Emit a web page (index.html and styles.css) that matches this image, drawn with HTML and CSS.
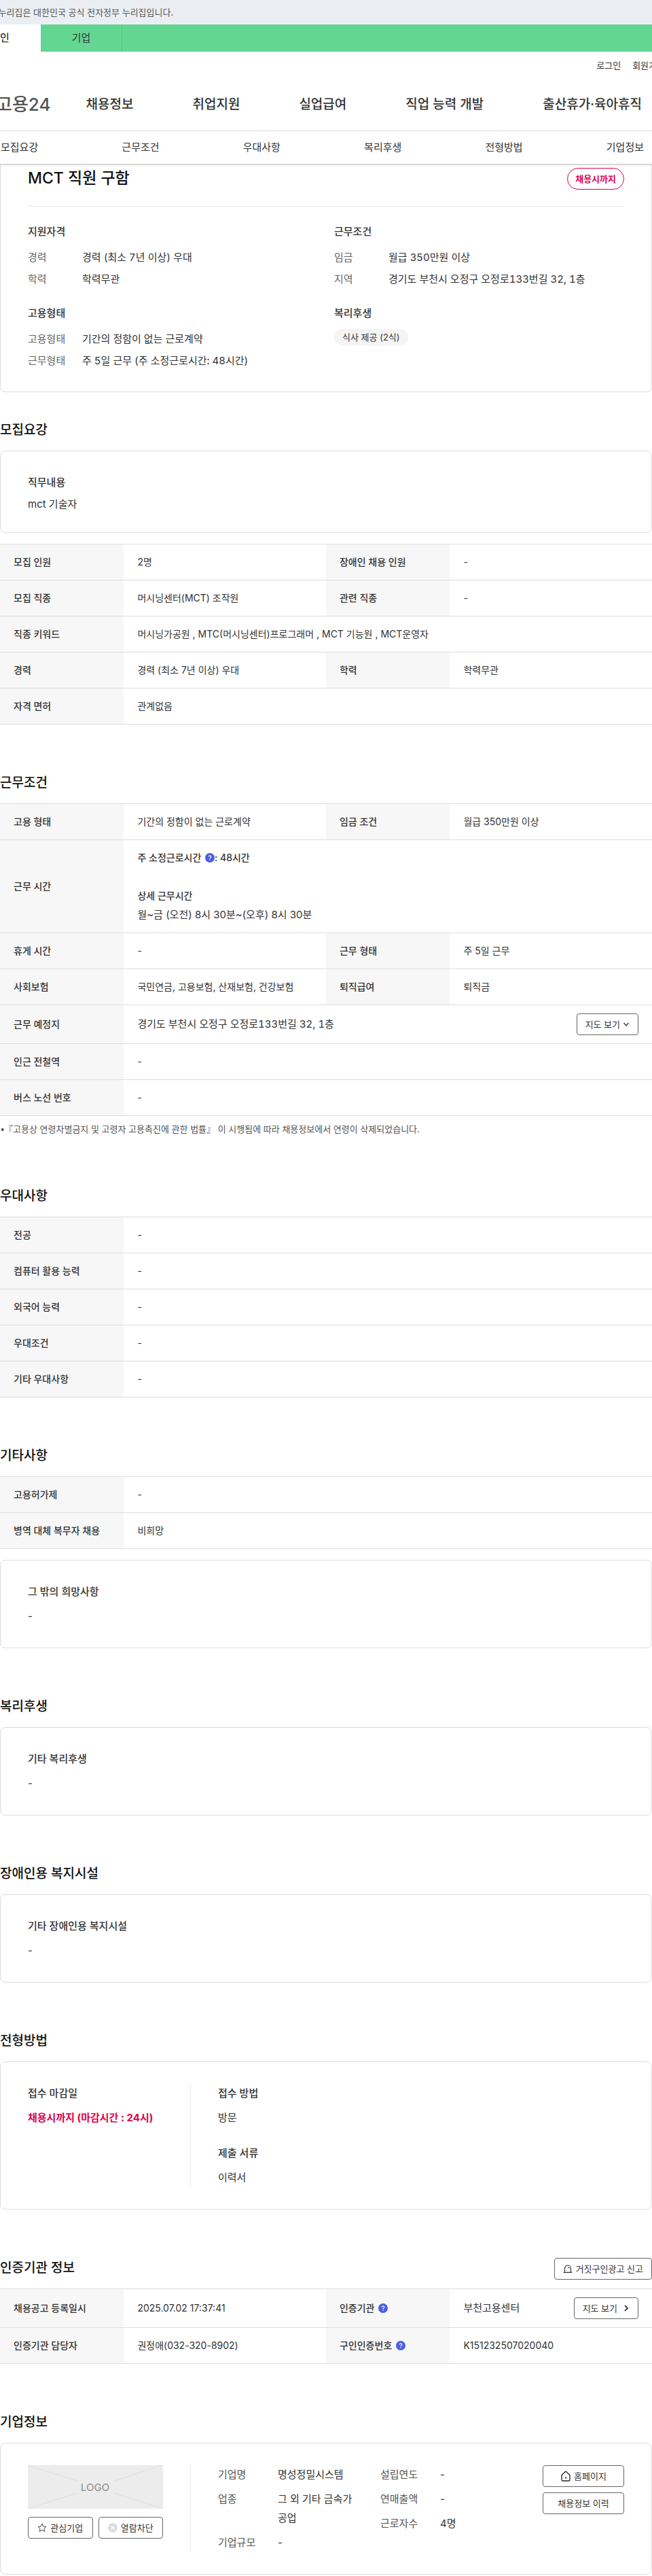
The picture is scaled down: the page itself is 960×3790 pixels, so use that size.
FILE: index.html
```html
<!DOCTYPE html>
<html lang="ko">
<head>
<meta charset="utf-8">
<meta name="viewport" content="width=device-width, initial-scale=1">
<title>MCT 직원 구함 - 고용24</title>
<link rel="stylesheet" href="styles.css">
</head>
<body>
<svg class="defs" aria-hidden="true">
  <symbol id="help" viewBox="0 0 14 14"><circle cx="7" cy="7" r="7" fill="#4b5fe2"/><path d="M5.3 5.6a1.7 1.7 0 1 1 2.5 1.5c-.6.3-.8.6-.8 1.1" fill="none" stroke="#fff" stroke-width="1.2"/><circle cx="7" cy="10" r=".8" fill="#fff"/></symbol>
</svg>
<header class="site-header">
  <p class="gov">이 누리집은 대한민국 공식 전자정부 누리집입니다.</p>
  <nav class="member" aria-label="회원 구분"><a class="on" href="#">개인</a><a href="#">기업</a></nav>
  <div class="util"><a href="#">로그인</a><a href="#">회원가입</a></div>
  <div class="gnb">
    <a class="logo" href="#">고용24</a>
    <nav class="gnb-menu" aria-label="주 메뉴"><a href="#">채용정보</a><a href="#">취업지원</a><a href="#">실업급여</a><a href="#">직업 능력 개발</a><a href="#">출산휴가·육아휴직</a></nav>
  </div>
  <nav class="anchors" aria-label="본문 바로가기"><a href="#recruit">모집요강</a><a href="#work">근무조건</a><a href="#prefer">우대사항</a><a href="#welfare">복리후생</a><a href="#process">전형방법</a><a href="#company">기업정보</a></nav>
</header>
<main>
  <section class="summary">
    <div class="summary-head"><h1>MCT 직원 구함</h1><span class="deadline">채용시까지</span></div>
    <div class="summary-grid">
      <div><h3>지원자격</h3><dl><dt>경력</dt><dd>경력 (최소 7년 이상) 우대</dd><dt>학력</dt><dd>학력무관</dd></dl></div>
      <div><h3>근무조건</h3><dl><dt>임금</dt><dd>월급 350만원 이상</dd><dt>지역</dt><dd>경기도 부천시 오정구 오정로133번길 32, 1층</dd></dl></div>
      <div><h3>고용형태</h3><dl><dt>고용형태</dt><dd>기간의 정함이 없는 근로계약</dd><dt>근무형태</dt><dd>주 5일 근무 (주 소정근로시간: 48시간)</dd></dl></div>
      <div><h3>복리후생</h3><span class="chip">식사 제공 (2식)</span></div>
    </div>
  </section>

  <section class="block first" id="recruit">
    <h2>모집요강</h2>
    <div class="card tight"><h3>직무내용</h3><p>mct 기술자</p></div>
    <table class="info after-card">
      <colgroup><col class="c-th"><col class="c-td"><col class="c-th"><col class="c-td"></colgroup>
      <tr><th scope="row">모집 인원</th><td>2명</td><th scope="row">장애인 채용 인원</th><td>-</td></tr>
      <tr><th scope="row">모집 직종</th><td>머시닝센터(MCT) 조작원</td><th scope="row">관련 직종</th><td>-</td></tr>
      <tr><th scope="row">직종 키워드</th><td colspan="3">머시닝가공원 , MTC(머시닝센터)프로그래머 , MCT 기능원 , MCT운영자</td></tr>
      <tr><th scope="row">경력</th><td>경력 (최소 7년 이상) 우대</td><th scope="row">학력</th><td>학력무관</td></tr>
      <tr><th scope="row">자격 면허</th><td colspan="3">관계없음</td></tr>
    </table>
  </section>

  <section class="block" id="work">
    <h2>근무조건</h2>
    <table class="info">
      <colgroup><col class="c-th"><col class="c-td"><col class="c-th"><col class="c-td"></colgroup>
      <tr><th scope="row">고용 형태</th><td>기간의 정함이 없는 근로계약</td><th scope="row">임금 조건</th><td>월급 350만원 이상</td></tr>
      <tr><th scope="row">근무 시간</th><td colspan="3"><p class="strong">주 소정근로시간 <button class="help" type="button" aria-label="도움말"><svg><use href="#help"/></svg></button>: 48시간</p><p class="strong detail">상세 근무시간</p><p class="hours">월~금 (오전) 8시 30분~(오후) 8시 30분</p></td></tr>
      <tr><th scope="row">휴게 시간</th><td>-</td><th scope="row">근무 형태</th><td>주 5일 근무</td></tr>
      <tr><th scope="row">사회보험</th><td>국민연금, 고용보험, 산재보험, 건강보험</td><th scope="row">퇴직급여</th><td>퇴직금</td></tr>
      <tr><th scope="row">근무 예정지</th><td class="with-btn" colspan="3"><div class="split"><span>경기도 부천시 오정구 오정로133번길 32, 1층</span><button class="btn" type="button">지도 보기<svg class="arrow" viewBox="0 0 10 10"><path d="M1.5 3 5 7l3.500-4" fill="none" stroke="#333" stroke-width="1.3"/></svg></button></div></td></tr>
      <tr><th scope="row">인근 전철역</th><td colspan="3">-</td></tr>
      <tr><th scope="row">버스 노선 번호</th><td colspan="3">-</td></tr>
    </table>
    <ul class="note"><li>『고용상 연령차별금지 및 고령자 고용촉진에 관한 법률』 이 시행됨에 따라 채용정보에서 연령이 삭제되었습니다.</li></ul>
  </section>

  <section class="block" id="prefer">
    <h2>우대사항</h2>
    <table class="info">
      <colgroup><col class="c-th"><col></colgroup>
      <tr><th scope="row">전공</th><td>-</td></tr>
      <tr><th scope="row">컴퓨터 활용 능력</th><td>-</td></tr>
      <tr><th scope="row">외국어 능력</th><td>-</td></tr>
      <tr><th scope="row">우대조건</th><td>-</td></tr>
      <tr><th scope="row">기타 우대사항</th><td>-</td></tr>
    </table>
  </section>

  <section class="block">
    <h2>기타사항</h2>
    <table class="info">
      <colgroup><col class="c-th"><col></colgroup>
      <tr><th scope="row">고용허가제</th><td>-</td></tr>
      <tr><th scope="row">병역 대체 복무자 채용</th><td>비희망</td></tr>
    </table>
    <div class="card after-table"><h3>그 밖의 희망사항</h3><p>-</p></div>
  </section>

  <section class="block" id="welfare"><h2>복리후생</h2><div class="card"><h3>기타 복리후생</h3><p>-</p></div></section>
  <section class="block"><h2>장애인용 복지시설</h2><div class="card"><h3>기타 장애인용 복지시설</h3><p>-</p></div></section>

  <section class="block" id="process">
    <h2>전형방법</h2>
    <div class="card columns">
      <div class="side"><h3>접수 마감일</h3><p class="due">채용시까지 (마감시간 : 24시)</p></div>
      <div class="body stack"><div><h3>접수 방법</h3><p>방문</p></div><div><h3>제출 서류</h3><p>이력서</p></div></div>
    </div>
  </section>

  <section class="block">
    <div class="title-row"><h2>인증기관 정보</h2><button class="btn" type="button"><svg class="siren" viewBox="0 0 14 14"><path d="M2.500 12V6.500a4.500 4.500 0 0 1 9 0V12M.8 12.400h12.400M7.500 4.500a2 2 0 0 1 1.500 2" fill="none" stroke="#333" stroke-width="1.2"/></svg>거짓구인광고 신고</button></div>
    <table class="info">
      <colgroup><col class="c-th"><col class="c-td"><col class="c-th"><col class="c-td"></colgroup>
      <tr><th scope="row">채용공고 등록일시</th><td>2025.07.02 17:37:41</td><th scope="row">인증기관 <button class="help" type="button" aria-label="도움말"><svg><use href="#help"/></svg></button></th><td class="with-btn"><div class="split"><span>부천고용센터</span><button class="btn" type="button">지도 보기<svg class="arrow gap" viewBox="0 0 10 10"><path d="M3 1l4 4-4 4" fill="none" stroke="#222" stroke-width="1.7"/></svg></button></div></td></tr>
      <tr><th scope="row">인증기관 담당자</th><td>권정애(032-320-8902)</td><th scope="row">구인인증번호 <button class="help" type="button" aria-label="도움말"><svg><use href="#help"/></svg></button></th><td>K151232507020040</td></tr>
    </table>
  </section>

  <section class="block" id="company">
    <h2>기업정보</h2>
    <div class="card columns">
      <div class="side">
        <svg class="logo-box" viewBox="0 0 199 64" role="img" aria-label="LOGO"><rect width="199" height="64" fill="#ececec"/><path d="M0 0l72 23M199 0l-72 23M0 64l72-23M199 64l-72-23" stroke="#ddd"/><text x="99" y="38" text-anchor="middle">LOGO</text></svg>
        <div class="pair">
          <button class="btn" type="button"><svg class="star" viewBox="0 0 14 14"><path d="M7 1.200l1.800 3.800 4.100.5-3 2.900.8 4.100L7 10.500l-3.700 2 .8-4.100-3-2.900 4.100-.5z" fill="none" stroke="#444"/></svg>관심기업</button>
          <button class="btn" type="button"><svg class="star" viewBox="0 0 14 14"><circle cx="7" cy="7" r="7" fill="#ddd"/><path d="M4.500 4.500l5 5M9.500 4.500l-5 5" stroke="#fff" stroke-width="1.2"/></svg>열람차단</button>
        </div>
      </div>
      <div class="body company">
        <dl class="facts"><dt>기업명</dt><dd>명성정밀시스템</dd><dt>업종</dt><dd>그 외 기타 금속가공업</dd><dt>기업규모</dt><dd>-</dd></dl>
        <dl class="facts"><dt>설립연도</dt><dd>-</dd><dt>연매출액</dt><dd>-</dd><dt>근로자수</dt><dd>4명</dd></dl>
        <div class="actions"><button class="btn" type="button"><svg class="home" viewBox="0 0 16 16"><path d="M2 6.500L8 1l6 5.500V13.500a1.500 1.500 0 0 1-1.500 1.500h-9A1.500 1.500 0 0 1 2 13.500zM8 9v3" fill="none" stroke="#222" stroke-width="1.3" stroke-linejoin="round"/></svg>홈페이지</button><button class="btn" type="button">채용정보 이력</button></div>
      </div>
    </div>
  </section>
</main>
</body>
</html>
```
FILE: styles.css
```css
* { box-sizing: border-box; }
body, h1, h2, h3, p, dl, dd, ul { margin: 0; padding: 0; }
body {
  font-family: "Inter", "Noto Sans CJK KR", sans-serif;
  font-size: 15px;
  line-height: 28px;
  color: #333;
  background: #fff;
  overflow-x: hidden;
}
a { color: inherit; text-decoration: none; }
.defs { display: none; }

.site-header { overflow: hidden; padding-bottom: 6px; margin-bottom: -6px; position: relative; }
.gov { height: 36px; margin-left: -18px; line-height: 36px; font-size: 13px; color: #555; background: #ebeff4; white-space: nowrap; }
.member { display: flex; height: 40px; margin-left: -60px; background: #63d694; line-height: 40px; }
.member a { width: 120px; text-align: center; border-right: 1px solid #57c586; }
.member .on { background: #fff; border-right: 0; font-weight: 500; }
.util { display: flex; justify-content: flex-end; gap: 17px; height: 40px; margin-right: -19px; line-height: 40px; font-size: 13px; }
.gnb { display: flex; align-items: center; height: 77px; gap: 52px; white-space: nowrap; border-bottom: 1px solid #e8e8e8; }
.logo { margin-left: -6px; font-size: 26px; font-weight: 500; color: #555; }
.gnb-menu { display: flex; gap: 87px; font-size: 19px; font-weight: 500; }
.anchors { display: flex; justify-content: space-between; height: 48px; padding: 0 12px 0 1px; line-height: 48px; background: #fff; box-shadow: 0 1px 3px rgba(0, 0, 0, .3); }

.summary { padding: 4px 40px 29px; border: 1px solid #ddd; border-top: 0; border-radius: 0 0 8px 8px; }
.summary-head { display: flex; align-items: flex-start; justify-content: space-between; height: 59px; border-bottom: 1px solid #e8e8e8; }
h1 { font-size: 23px; font-weight: 500; line-height: 34px; color: #111; }
.deadline { margin-top: 2px; padding: 0 11px; border: 1px solid #e0004d; border-radius: 16px; font-size: 13px; font-weight: 700; line-height: 30px; color: #e0004d; }
.summary-grid { display: grid; grid-template-columns: 451px 1fr; row-gap: 20px; padding-top: 23px; }
h3 { font-size: 15px; font-weight: 500; line-height: 28px; }
.summary-grid dl { display: grid; grid-template-columns: 80px 1fr; margin-top: 8px; line-height: 32px; }
.summary-grid dd, .split { font-variant-numeric: tabular-nums; }
.summary-grid dt { color: #666; }
.chip { display: block; width: max-content; margin-top: 9px; padding: 0 12px; border-radius: 12px; background: #f4f4f4; font-size: 13px; line-height: 24px; }

.block { padding-top: 71px; }
.block.first { padding-top: 41px; }
h2 { margin-bottom: 15px; font-size: 19px; font-weight: 500; line-height: 30px; color: #111; }
.card { padding: 32px 40px; border: 1px solid #ddd; border-radius: 8px; }
.card p { margin-top: 8px; }
.card.tight { padding-bottom: 27px; }
.card.tight p { margin-top: 4px; }
.after-card, .after-table { margin-top: 16px; }

.info { width: 100%; border-collapse: collapse; table-layout: fixed; font-size: 14px; }
.c-th { width: 19%; }
.c-td { width: 31%; }
.info th, .info td { height: 53px; padding: 12px 20px; border: solid #ddd; border-width: 1px 0; text-align: left; }
.info th { font-weight: 500; background: #f7f7f7; }
.info .with-btn { height: 57px; }
.split { display: flex; align-items: center; justify-content: space-between; font-size: 15px; }
.strong { font-weight: 500; }
.detail { margin-top: 28px; }
.hours { font-size: 15px; }
.help { margin-left: 2px; padding: 0; border: 0; background: none; vertical-align: -2px; }
.help svg { display: block; width: 14px; height: 14px; }
.note { margin-top: 6px; font-size: 13px; line-height: 26px; color: #555; list-style: none; }
.note li { display: flex; }
.note li::before { content: "•"; flex: none; width: 6px; }

.btn { display: inline-flex; align-items: center; justify-content: center; height: 32px; padding: 0 12px; border: 1px solid #666; border-radius: 4px; background: #fff; font: inherit; font-size: 13px; line-height: 20px; color: #333; white-space: nowrap; }
.arrow { width: 10px; height: 10px; margin-left: 4px; }
.arrow.gap { margin-left: 8px; }
.siren, .star { width: 14px; height: 14px; margin-right: 5px; }
.home { width: 16px; height: 16px; margin-right: 4px; }
.title-row { display: flex; justify-content: space-between; align-items: flex-start; }

.columns { display: flex; }
.side { width: 240px; padding-right: 40px; border-right: 1px solid #e8e8e8; white-space: nowrap; }
.body { flex: 1; padding-left: 40px; }
.stack { display: grid; gap: 24px; }
.due { font-weight: 700; color: #e0004d; }
.logo-box { display: block; width: 100%; font-size: 15px; font-weight: 500; fill: #999; }
.pair { display: grid; grid-template-columns: 1fr 1fr; gap: 8px; margin-top: 12px; }
.pair .btn { padding: 0; }
.company { display: flex; justify-content: space-between; }
.facts { display: grid; grid-template-columns: 88px 1fr; row-gap: 8px; width: 204px; align-content: start; }
.facts dt { color: #555; }
.actions { display: grid; gap: 8px; align-content: start; width: 120px; }
```
